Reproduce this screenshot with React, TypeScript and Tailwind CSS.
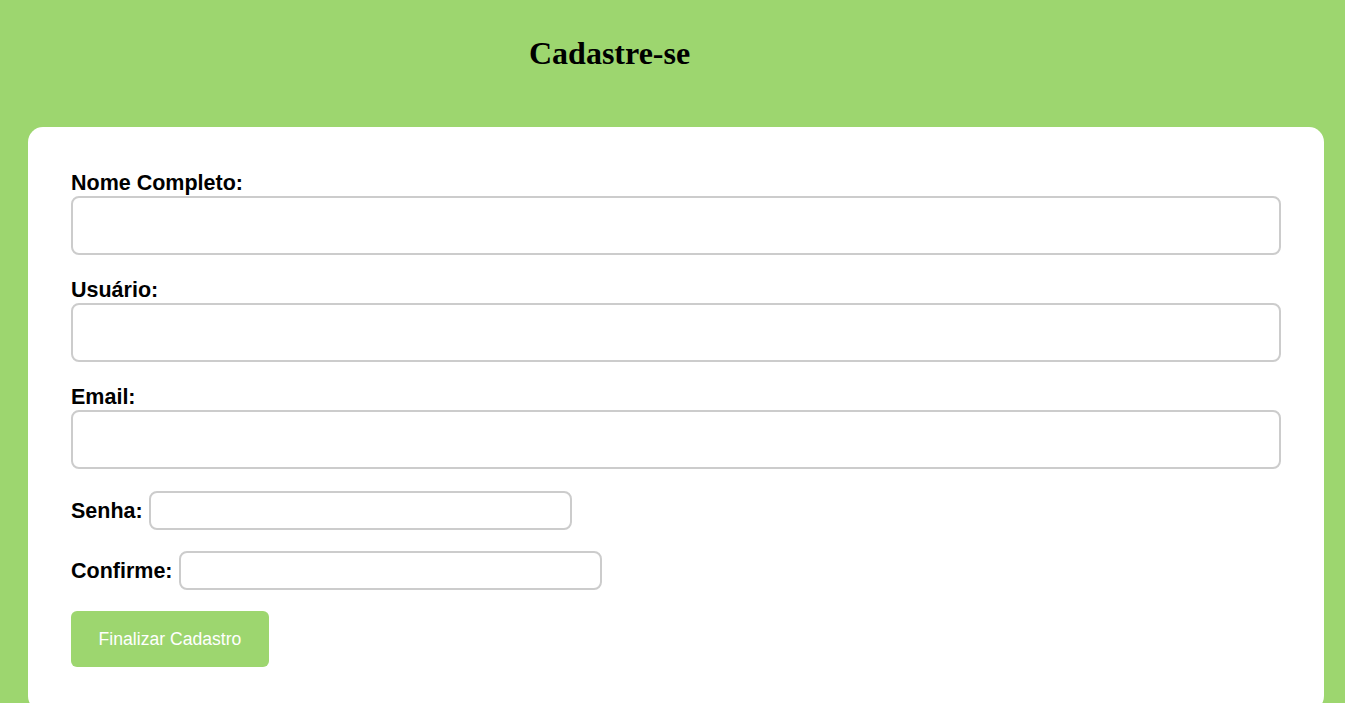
import React from "react";

export default function App() {
  const label = "block text-[21.5px] leading-[26px] font-bold text-black";
  const bigInput =
    "block w-full h-[59px] rounded-[8px] border-2 border-[#cccccc] bg-white outline-none";
  const smallInput =
    "h-[39px] w-[423px] rounded-[8px] border-2 border-[#cccccc] bg-white outline-none";
  return (
    <div
      className="min-h-[703px] w-full bg-[#9dd66f] overflow-hidden"
      style={{ fontFamily: '"Liberation Sans", Arial, sans-serif' }}
    >
      <div className="h-[127px] pt-[33px] pl-[529px]">
        <h1
          className="text-[32px] leading-[40px] font-bold text-black"
          style={{ fontFamily: '"Liberation Serif", "Times New Roman", serif' }}
        >
          Cadastre-se
        </h1>
      </div>
      <div className="ml-[28px] mr-[21px] h-[584px] rounded-[15px] bg-white px-[43px] pt-[43px]">
        <div className="flex flex-col">
          <label className={label}>Nome Completo:</label>
          <input className={bigInput} />
          <label className={`${label} mt-[22px]`}>Usuário:</label>
          <input className={bigInput} />
          <label className={`${label} mt-[22px]`}>Email:</label>
          <input className={bigInput} />
          <div className="mt-[22px] flex items-center gap-[6px]">
            <label className={label}>Senha:</label>
            <input type="password" className={smallInput} />
          </div>
          <div className="mt-[21px] flex items-center gap-[6px]">
            <label className={label}>Confirme:</label>
            <input type="password" className={smallInput} />
          </div>
          <div className="mt-[21px]">
            <button className="h-[56px] w-[198px] rounded-[6px] bg-[#9dd66f] text-[17.6px] text-white">
              Finalizar Cadastro
            </button>
          </div>
        </div>
      </div>
    </div>
  );
}
